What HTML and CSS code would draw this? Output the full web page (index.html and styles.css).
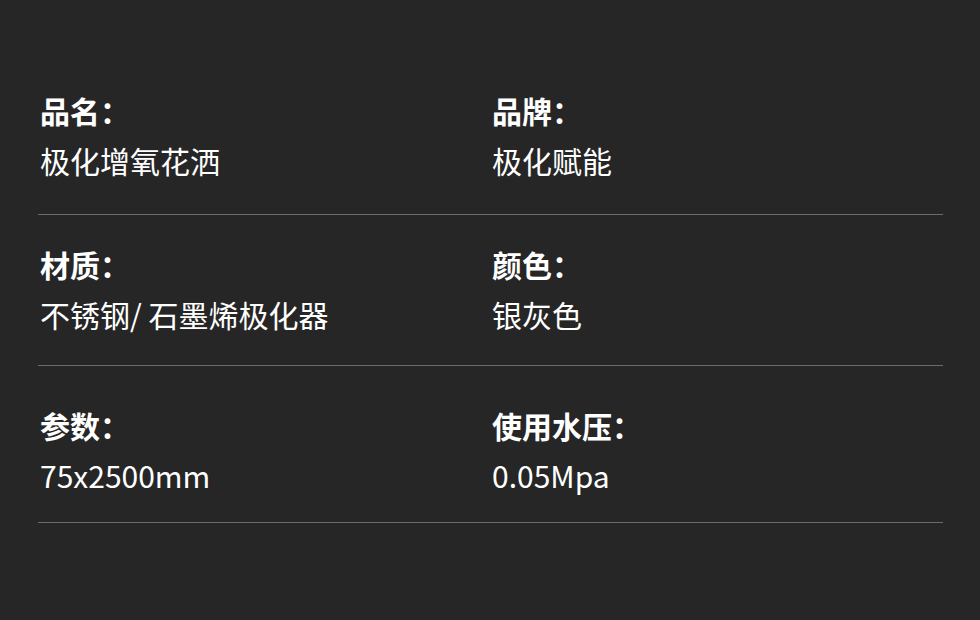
FILE: index.html
```html
<!DOCTYPE html>
<html lang="zh-CN">
<head>
<meta charset="utf-8">
<link rel="stylesheet" href="styles.css">
</head>
<body>
<main class="specs">
  <section class="row row-1">
    <div class="cell"><div class="label">品名：</div><div class="value">极化增氧花洒</div></div>
    <div class="cell"><div class="label">品牌：</div><div class="value">极化赋能</div></div>
  </section>
  <section class="row row-2">
    <div class="cell"><div class="label">材质：</div><div class="value">不锈钢/ 石墨烯极化器</div></div>
    <div class="cell"><div class="label">颜色：</div><div class="value">银灰色</div></div>
  </section>
  <section class="row row-3">
    <div class="cell"><div class="label">参数：</div><div class="value">75x2500mm</div></div>
    <div class="cell"><div class="label">使用水压：</div><div class="value">0.05Mpa</div></div>
  </section>
</main>
</body>
</html>
```
FILE: styles.css
```css
html, body {
  margin: 0;
  padding: 0;
  background: #262626;
}
body {
  width: 980px;
  height: 620px;
  overflow: hidden;
  font-family: "Noto Sans CJK SC", "Noto Sans", sans-serif;
  color: #ffffff;
}
.specs {
  padding: 88px 37px 0 38px;
}
.row {
  display: grid;
  grid-template-columns: 452px 1fr;
  border-bottom: 1px solid #6b6b6b;
}
.row-1 { padding: 0 0 26px 0; }
.row-2 { padding: 27px 0 23px 0; }
.row-3 { padding: 37px 0 19px 0; }
.cell {
  padding-left: 2px;
}
.label {
  font-size: 30px;
  font-weight: 700;
  line-height: 44px;
}
.value {
  font-size: 30px;
  font-weight: 400;
  line-height: 56px;
}
```
